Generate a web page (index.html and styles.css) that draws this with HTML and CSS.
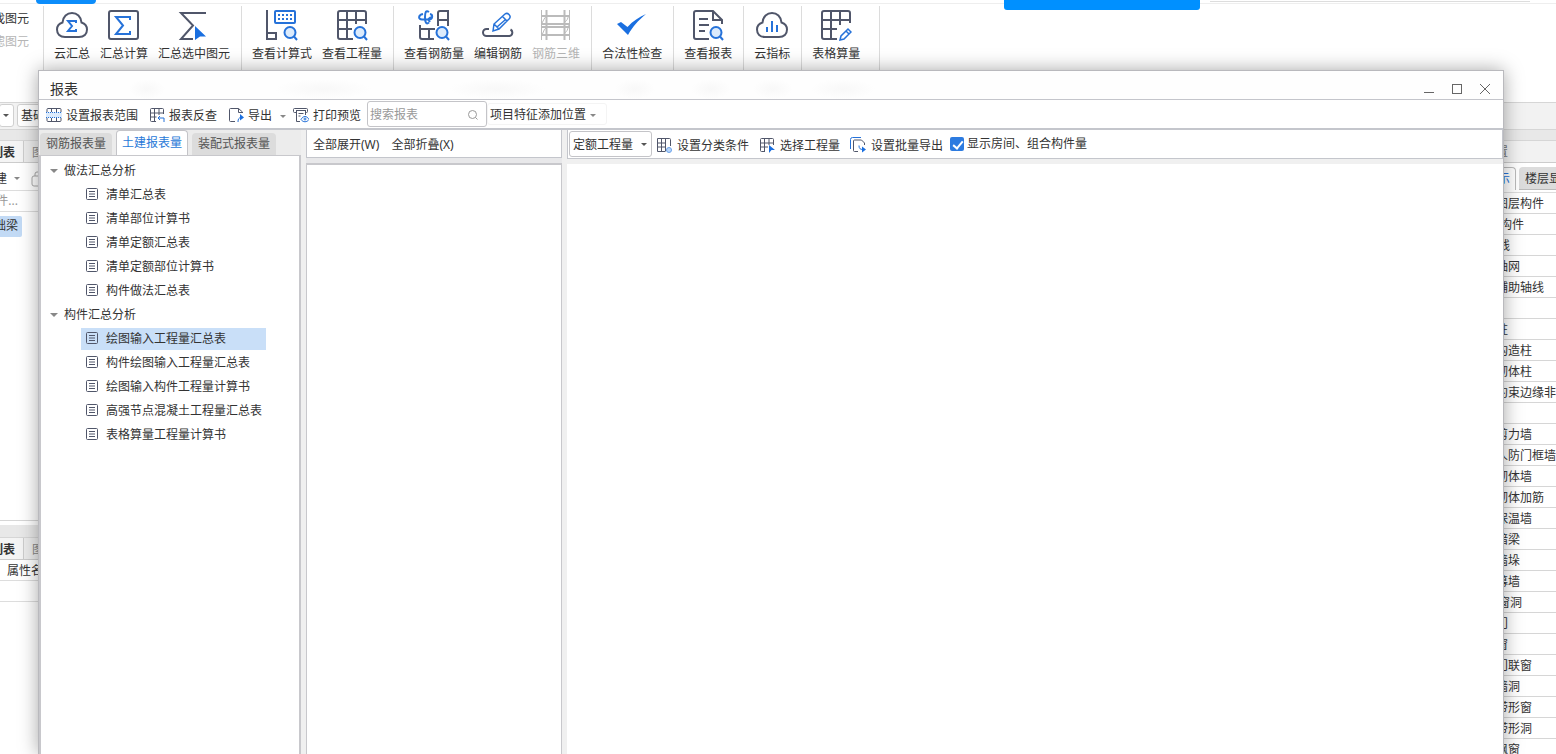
FILE: index.html
```html
<!DOCTYPE html>
<html lang="zh-CN">
<head>
<meta charset="utf-8">
<title>报表</title>
<link rel="stylesheet" href="styles.css">
</head>
<body>
<svg class="sprite" aria-hidden="true">
  <symbol id="cloud" viewBox="0 0 32 32"><path d="M9 28C4 28 1 25 1 20.500 1 17 3.500 14.500 6.500 13.500 7 7.500 11 4 16 4s9 3.500 9.500 9.500c3 1 5.500 3.500 5.500 7 0 4.500-3 7.500-8 7.500z"/></symbol>
  <symbol id="lens" viewBox="0 0 32 32"><g class="blue"><circle class="tint" cx="24" cy="23.500" r="5.500"/><path d="M28 27.500l3 3.500"/></g></symbol>
  <symbol id="doc" viewBox="0 0 14 14"><rect x="1.500" y="1.500" width="11" height="11" rx="1"/><path d="M4 4.500h6M4 7h6M4 9.500h6"/></symbol>
</svg>
<div class="app">
  <header class="strip">
    <span class="strip-tab"></span>
    <span class="strip-banner"></span>
    <span class="strip-search"></span>
  </header>
  <nav class="ribbon" aria-label="工程量">
    <div class="ribbon-side"><span>查找图元</span><span class="off">过滤图元</span></div>
    <div class="group">
      <button class="tool"><svg class="big"><use href="#cloud"/><path class="blue" d="M20 14v-2h-8l4 5-4 5h8v-2"/></svg>云汇总</button>
      <button class="tool"><svg class="big"><rect x="1" y="2" width="29" height="28" rx="2"/><path class="blue" d="M22 11V8H8l7 8.500L8 25h14v-3"/></svg>汇总计算</button>
      <button class="tool"><svg class="big"><path d="M28 4H3l12 12.500L3 30h12"/><path class="fill" d="M17 17l11 10.500h-6L17 31z"/></svg>汇总选中图元</button>
    </div>
    <div class="group">
      <button class="tool"><svg class="big"><path d="M1 1v29h9v-6H1"/><rect class="blue" x="9" y="2" width="20" height="12" rx="1"/><path class="blue dots" d="M12 6H27M12 10H27"/><use href="#lens"/></svg>查看计算式</button>
      <button class="tool"><svg class="big"><path d="M30 15V4a2 2 0 0 0-2-2H4a2 2 0 0 0-2 2v24a2 2 0 0 0 2 2h13M2 11h28M2 20h14M11 2v28M20 2v13"/><use href="#lens"/></svg>查看工程量</button>
    </div>
    <div class="group">
      <button class="tool"><svg class="big"><path d="M20 17V4a2 2 0 0 1 2-2h8v15M20 11h10M2 16v12a2 2 0 0 0 2 2h12M2 20h15M11 20v10"/><path class="blue" d="M11 3C8 1 7 3 7 8s1 8 4 5.500M5 5C0 6 0 10.500 4 10.500h7c4 0 4-5 1-5.500M13 8l-3 2.500 2 2.500"/><use href="#lens"/></svg>查看钢筋量</button>
      <button class="tool"><svg class="big"><path d="M7 20H4.500a3.500 3.500 0 0 0 0 7h23a3.500 3.500 0 0 0 1-6.500"/><path class="blue slim2" d="M11 22l1-7L23 5q2-1.500 4 .5t.5 4L17 20zM20.500 7.500l4.500 4.500M15 18l8-7M12 15l5 5"/></svg>编辑钢筋</button>
      <button class="tool" disabled><svg class="big"><path d="M6.500 1v30M24.500 1v30M1.500 7h28M2 15h27M2 18h27M2 26h27"/><path class="slim" d="M1.500 1v30M29.500 1v30M8 6Q5 7 2 14M24 14q4-3 5-8M8 17q-4 2-6 9M24 25q4-3 5-9"/></svg>钢筋三维</button>
    </div>
    <div class="group">
      <button class="tool"><svg class="big"><path class="fill" d="M1 15l4-2 6.500 5C17 12 23 8 30 5 22 12 17 17 12 26z"/></svg>合法性检查</button>
    </div>
    <div class="group">
      <button class="tool"><svg class="big"><path d="M30 15v-4l-9-9H4a2 2 0 0 0-2 2v24a2 2 0 0 0 2 2h13M21 2v9h9M7 10h9M7 16h10M7 22h6"/><use href="#lens"/></svg>查看报表</button>
    </div>
    <div class="group">
      <button class="tool"><svg class="big"><use href="#cloud"/><path class="blue" d="M11 18v5M16 12v11M21 16v7"/></svg>云指标</button>
    </div>
    <div class="group last">
      <button class="tool"><svg class="big"><path d="M30 14V4a2 2 0 0 0-2-2H4a2 2 0 0 0-2 2v24a2 2 0 0 0 2 2h13M2 11h28M2 20h15M11 2v28M20 2v14"/><path class="blue slim2" d="M20 31l1-4 7-7 3 3-7 7zM26 22l3 3"/></svg>表格算量</button>
    </div>
  </nav>
  <div class="context"><span class="combo first"><i class="caret"></i></span><span class="combo second">基础层</span></div>
  <div class="gapbar"></div>
  <div class="panes">
    <aside class="left-pane">
      <div class="ptabs"><span class="ptab on">构件列表</span><span class="ptab">图纸管理</span></div>
      <div class="newrow"><span class="word">新建</span><i class="caret grey"></i><svg class="copy" viewBox="0 0 14 16"><rect x="4" y="1" width="12" height="10" rx="2"/><rect class="sheet" x="1" y="5" width="11" height="10" rx="2"/></svg></div>
      <div class="findrow"><span>搜索构件...</span></div>
      <div class="listing"><span class="picked">基础梁</span></div>
      <div class="gapbar low"></div>
      <div class="ptabs"><span class="ptab on">属性列表</span><span class="ptab">图层管理</span></div>
      <div class="prop">属性名称</div>
      <div class="prop"></div>
    </aside>
    <aside class="right-pane">
      <div class="rhead">显示设置</div>
      <div class="rtabs"><span class="rtab on">图元显示</span><span class="rtab">楼层显示</span></div>
      <ul class="layers">
        <li>图层构件</li><li class="root">构件</li><li class="head">轴线</li><li>轴网</li><li>辅助轴线</li><li></li><li>柱</li><li>构造柱</li><li>砌体柱</li><li>约束边缘非阴影区</li><li></li><li>剪力墙</li><li>人防门框墙</li><li>砌体墙</li><li>砌体加筋</li><li>保温墙</li><li>暗梁</li><li>墙垛</li><li>幕墙</li><li class="head">门窗洞</li><li>门</li><li>窗</li><li>门联窗</li><li>墙洞</li><li>带形窗</li><li>带形洞</li><li>飘窗</li>
      </ul>
    </aside>
  </div>
</div>

<section class="dialog" role="dialog" aria-labelledby="dialog-title">
  <header class="title">
    <h1 id="dialog-title">报表</h1>
    <div class="winbtns">
      <button aria-label="最小化"><svg viewBox="0 0 12 12"><path d="M1 9.500h10"/></svg></button>
      <button aria-label="最大化"><svg viewBox="0 0 12 12"><rect x="1.500" y="1.500" width="9" height="9"/></svg></button>
      <button aria-label="关闭"><svg viewBox="0 0 12 12"><path d="M1 1l10 10M11 1L1 11"/></svg></button>
    </div>
  </header>
  <div class="bar">
    <button class="cmd"><svg class="small" viewBox="0 0 16 16"><path d="M5.500 1v14M10.500 1v14M1 5V2.500a1 1 0 0 1 1-1h12a1 1 0 0 1 1 1V5M1 11v2.500a1 1 0 0 0 1 1h12a1 1 0 0 0 1-1V11"/><path class="band" d="M0 5h16v6H0z"/><path class="blue" stroke-dasharray="1 1" d="M0 5.500h16M0 10.500h16"/></svg>设置报表范围</button>
    <button class="cmd"><svg class="small" viewBox="0 0 16 16"><path d="M14.500 7V2.500a1 1 0 0 0-1-1h-11a1 1 0 0 0-1 1v11a1 1 0 0 0 1 1H7M1.500 6h13M1.500 10h6M5.500 1v13M10 1v7"/><path class="blue" d="M15 15v-4H9m2-2l-2 2 2 2"/></svg>报表反查</button>
    <button class="cmd"><svg class="small" viewBox="0 0 16 16"><path d="M14.500 6v-1l-4-3.500h-8a1 1 0 0 0-1 1v11a1 1 0 0 0 1 1H7M10.500 1.500v4h4"/><path class="blue" d="M10 15c0-3 1-4.500 3-4.500"/><path class="fill" d="M12 7l4 3.500-4 3z"/></svg>导出<i class="caret grey"></i></button>
    <button class="cmd"><svg class="small" viewBox="0 0 16 16"><path d="M3 5.500H1.500a1 1 0 0 1-1-1v-2a1 1 0 0 1 1-1h12a1 1 0 0 1 1 1v2a1 1 0 0 1-1 1H13M3 3.500h10M3.500 3.500v11H7M12.500 3.500V8M5.500 6.500h5M5.500 9h2"/><path class="blue" d="M8 12.500c2-4 6-4 8 0-2 3-6 3-8 0z"/><circle class="blue" cx="12" cy="12" r="1"/></svg>打印预览</button>
    <label class="search"><input type="text" placeholder="搜索报表" aria-label="搜索报表"><svg viewBox="0 0 12 12"><circle cx="5.500" cy="5.500" r="4"/><path d="M8.500 8.500l2 2"/></svg></label>
    <button class="place">项目特征添加位置<i class="caret grey"></i></button>
  </div>
  <div class="body">
    <div class="tree-col">
      <div class="tabs" role="tablist">
        <button role="tab" class="tab">钢筋报表量</button>
        <button role="tab" class="tab active" aria-selected="true">土建报表量</button>
        <button role="tab" class="tab">装配式报表量</button>
      </div>
      <div class="tree">
        <div class="branch"><i class="caret tri"></i>做法汇总分析</div>
        <ul>
          <li><svg><use href="#doc"/></svg>清单汇总表</li>
          <li><svg><use href="#doc"/></svg>清单部位计算书</li>
          <li><svg><use href="#doc"/></svg>清单定额汇总表</li>
          <li><svg><use href="#doc"/></svg>清单定额部位计算书</li>
          <li><svg><use href="#doc"/></svg>构件做法汇总表</li>
        </ul>
        <div class="branch"><i class="caret tri"></i>构件汇总分析</div>
        <ul>
          <li class="sel"><svg><use href="#doc"/></svg>绘图输入工程量汇总表</li>
          <li><svg><use href="#doc"/></svg>构件绘图输入工程量汇总表</li>
          <li><svg><use href="#doc"/></svg>绘图输入构件工程量计算书</li>
          <li><svg><use href="#doc"/></svg>高强节点混凝土工程量汇总表</li>
          <li><svg><use href="#doc"/></svg>表格算量工程量计算书</li>
        </ul>
      </div>
    </div>
    <div class="mid-col">
      <div class="mid-bar"><button>全部展开(W)</button><button>全部折叠(X)</button></div>
      <div class="mid-view"></div>
    </div>
    <div class="main-col">
      <div class="main-bar">
        <label class="pick"><select aria-label="工程量类型"><option>定额工程量</option><option>清单工程量</option></select><i class="caret"></i></label>
        <button class="cmd"><svg class="small" viewBox="0 0 16 16"><path d="M9 14.500H1.500v-13h12a1 1 0 0 1 1 1V9M5.500 1.500v13M9.500 1.500v13M1.500 6h8M1.500 10h8"/><circle class="gear" cx="13" cy="13" r="2.500"/></svg>设置分类条件</button>
        <button class="cmd"><svg class="small" viewBox="0 0 16 16"><path d="M14.500 8V2.500a1 1 0 0 0-1-1h-11a1 1 0 0 0-1 1v11a1 1 0 0 0 1 1H6M1.500 6h13M1.500 10H9M5.500 1v13M10 1v7"/><path class="fill" d="M10 8l6 5h-3.500L10 16z"/></svg>选择工程量</button>
        <button class="cmd"><svg class="small" viewBox="0 0 16 16"><path class="blue" d="M.5 12V2.500a2 2 0 0 1 2-2H11"/><path d="M14.500 8V6l-3-3h-7a1 1 0 0 0-1 1v9.500a1 1 0 0 0 1 1H8"/><path class="blue" d="M9 8.500c0 3 1 4 4 4"/><path class="fill" d="M12 9.500l4 3-4 3z"/></svg>设置批量导出</button>
        <label class="check"><input type="checkbox" checked>显示房间、组合构件量</label>
      </div>
      <div class="main-view"></div>
    </div>
  </div>
</section>
</body>
</html>
```
FILE: styles.css
```css
* { box-sizing: border-box; }
html, body { height: 100%; }
body {
  margin: 0;
  position: relative;
  overflow: hidden;
  font: 12px/18px "Noto Sans", "Noto Sans CJK SC", sans-serif;
  color: #333;
  background: #fff;
}
button, input, select { font: inherit; color: inherit; }
button { border: 0; padding: 0; background: none; white-space: nowrap; }
ul { list-style: none; margin: 0; padding: 0; }
.sprite { position: absolute; width: 0; height: 0; }
svg { fill: none; stroke: #50566a; }
.blue { stroke: #2672d9; }
.tint { fill: #dcebfc; }
.fill { fill: #1a6fe0; stroke: none; }
.band { fill: #dcebfc; stroke: none; }
.sheet { fill: #fff; }
.gear { fill: #b9d6f8; stroke: #6ba2ea; }
.caret {
  flex: none;
  border: 3px solid transparent;
  border-top-color: #555;
  border-bottom-width: 0;
}
.caret.grey { border-top-color: #888; }

/* application behind the dialog */
.app { height: 100%; display: flex; flex-direction: column; }
.strip {
  flex: none;
  display: flex;
  align-items: flex-start;
  height: 4px;
  padding: 0 26px 0 36px;
  border-bottom: 1px solid #eee;
}
.strip-tab { width: 60px; height: 4px; border-radius: 0 0 6px 6px; background: #0c8dfb; }
.strip-banner { width: 196px; height: 10px; margin-left: auto; border-radius: 0 0 3px 3px; background: #0090ff; }
.strip-search { width: 320px; height: 2px; margin-left: 10px; border-bottom: 1px solid #ddd; }
.ribbon { flex: none; display: flex; height: 98px; padding-top: 2px; }
.ribbon-side {
  width: 44px;
  overflow: hidden;
  display: flex;
  flex-direction: column;
  align-items: flex-end;
  gap: 5px;
  padding: 4px 14px 0 0;
  border-right: 1px solid #dcdcdc;
  white-space: nowrap;
}
.off { color: #b5b5b5; }
.group {
  display: flex;
  align-items: flex-start;
  gap: 10px;
  padding: 3px 11px 0 10px;
  border-right: 1px solid #dcdcdc;
}
.group.last { padding-right: 19px; }
.tool { display: flex; flex-direction: column; align-items: center; gap: 4px; }
.tool:disabled { color: #b5b5b5; }
.tool:disabled svg { stroke: #bbb; }
.big { width: 32px; height: 32px; stroke-width: 2; }
.slim { stroke-width: 1; }
.slim2 { stroke-width: 1.5; }
.dots { stroke-dasharray: 2 2; stroke-width: 2; }
.context {
  flex: none;
  display: flex;
  gap: 3px;
  height: 28px;
  padding: 1px 0 2px;
  background: #f2f2f2;
  border-top: 1px solid #d6d6d6;
  border-bottom: 1px solid #d6d6d6;
}
.combo { display: flex; align-items: center; background: #fff; border: 1px solid #d0d0d0; border-radius: 3px; }
.combo.first { width: 15px; margin-left: -1px; padding-left: 3px; }
.combo.second { width: 90px; padding-left: 3px; }
.gapbar { flex: none; height: 11px; background: #e8e8e8; border-bottom: 1px solid #d6d6d6; }
.gapbar.low { height: 17px; border-top: 4px solid #fff; }
.panes { flex: 1; min-height: 0; display: flex; justify-content: space-between; }
.left-pane { width: 60px; overflow: hidden; white-space: nowrap; }
.ptabs { display: flex; height: 22px; background: #ececec; border-bottom: 1px solid #ccc; }
.ptab { width: 60px; flex: none; padding: 3px 8px 0; color: #888; }
.ptab.on {
  width: 24px;
  display: flex;
  justify-content: flex-end;
  overflow: hidden;
  border-right: 1px solid #ccc;
  background: #f4f4f4;
  color: #333;
  font-weight: bold;
}
.newrow { display: flex; align-items: center; gap: 7px; height: 28px; padding-top: 4px; border-bottom: 1px solid #ddd; }
.word { width: 7px; display: flex; justify-content: flex-end; overflow: hidden; }
.copy { width: 14px; height: 16px; margin-left: 4px; stroke: #aaa; }
.findrow { display: flex; justify-content: flex-end; width: 18px; height: 20px; padding-top: 1px; color: #999; }
.listing { height: 310px; padding-top: 4px; border-top: 1px solid #ddd; border-bottom: 1px solid #d6d6d6; }
.picked {
  display: flex;
  justify-content: flex-end;
  width: 22px;
  height: 21px;
  padding: 1px 4px;
  overflow: hidden;
  border-radius: 0 2px 2px 0;
  background: #c2daf5;
}
.prop { height: 21px; padding: 2px 7px 0; border-bottom: 1px solid #ddd; }
.right-pane { width: 82px; overflow: hidden; white-space: nowrap; }
.rhead { display: flex; justify-content: flex-end; height: 22px; padding: 2px 48px 0 0; background: #f2f2f2; border-bottom: 1px solid #ccc; color: #777; }
.rtabs { display: flex; justify-content: flex-end; gap: 3px; height: 29px; padding: 4px 0 2px; }
.rtab { width: 37px; flex: none; padding: 3px 6px; overflow: hidden; background: #dcdcdc; border-bottom: 1px solid #bbb; border-radius: 4px 0 0 0; }
.rtab.on { display: flex; justify-content: flex-end; background: #fff; border: 1px solid #bbb; border-bottom: 0; border-radius: 0 4px 0 0; padding: 2px 5px; color: #2672d9; }
.layers { border-top: 1px solid #ddd; }
.layers li { height: 21px; padding: 2px 0 0 22px; border-bottom: 1px solid #d6d6d6; }
.layers .head { padding-left: 12px; }
.layers .root { padding-left: 26px; }

/* report dialog */
.dialog {
  position: absolute;
  top: 70px;
  right: 52px;
  bottom: 0;
  left: 38px;
  display: flex;
  flex-direction: column;
  background: #f0f0f0;
  border: 1px solid #b9b9bd;
  border-bottom: 0;
  box-shadow: 0 0 18px rgba(0, 0, 0, .35);
}
.title {
  flex: none;
  display: flex;
  align-items: flex-end;
  justify-content: space-between;
  height: 29px;
  padding: 0 12px 0 11px;
  border-bottom: 1px solid #c4c5cb;
  background:
    radial-gradient(closest-side, #f8f8f8, transparent) 90px 8px / 36px 20px no-repeat,
    radial-gradient(closest-side, #f8f8f8, transparent) 236px 8px / 96px 20px no-repeat,
    radial-gradient(closest-side, #f8f8f8, transparent) 410px 8px / 96px 20px no-repeat,
    radial-gradient(closest-side, #f8f8f8, transparent) 576px 8px / 40px 20px no-repeat,
    radial-gradient(closest-side, #f8f8f8, transparent) 652px 8px / 40px 20px no-repeat,
    radial-gradient(closest-side, #f8f8f8, transparent) 714px 8px / 40px 20px no-repeat,
    radial-gradient(closest-side, #f8f8f8, transparent) 772px 8px / 64px 20px no-repeat,
    #fefefe;
}
.title h1 { margin: 0; font-size: 14px; font-weight: normal; line-height: 20px; }
.winbtns { display: flex; gap: 16px; padding-bottom: 4px; }
.winbtns button { width: 12px; height: 12px; display: flex; }
.winbtns svg { width: 12px; height: 12px; stroke: #666; }
.bar {
  flex: none;
  display: flex;
  align-items: center;
  height: 30px;
  padding-left: 7px;
  background: #fff;
  border-bottom: 2px solid #c4c6cc;
}
.cmd { display: flex; align-items: center; gap: 4px; margin-right: 11px; padding-top: 4px; }
.cmd svg { margin-bottom: 2px; }
.cmd .caret { margin-left: 4px; }
.bar .cmd:nth-child(3) { margin-right: 7px; }
.bar .cmd:nth-child(4) { margin-right: 6px; }
.small { width: 16px; height: 16px; }
.search {
  display: flex;
  align-items: center;
  width: 120px;
  height: 26px;
  padding: 1px 7px 0 2px;
  border: 1px solid #c4c4c8;
  border-radius: 3px;
}
.search input { flex: 1; min-width: 0; border: 0; outline: 0; padding: 0; background: none; }
.search input::placeholder { color: #999; opacity: 1; }
.search svg { width: 12px; height: 12px; stroke: #999; }
.place {
  display: flex;
  align-items: center;
  gap: 4px;
  height: 22px;
  padding: 2px 10px 0 2px;
  border: 1px solid #f4f4f4;
  border-radius: 3px;
}
.body { flex: 1; min-height: 0; display: flex; }
.tree-col { width: 262px; flex: none; display: flex; flex-direction: column; }
.tabs { flex: none; display: flex; align-items: flex-end; gap: 4px; height: 25px; padding-left: 1px; background: #ececec; }
.tab { height: 22px; padding: 0 6px; border-radius: 4px 4px 0 0; background: #dcdcdc; color: #555; }
.tab.active { height: 25px; padding: 0 5px; border: 1px solid #c4c4c8; border-bottom: 0; background: #fff; color: #2879d8; }
.tree {
  flex: 1;
  padding-top: 3px;
  background: #fff;
  border: 2px solid #c8c8cc;
  border-top-width: 1px;
  border-bottom: 0;
}
.branch { display: flex; align-items: center; gap: 6px; height: 24px; padding-left: 9px; }
.tri { border-width: 4px 4px 0; border-top-color: #888; }
.tree ul { display: flex; flex-direction: column; gap: 2px; padding: 1px 33px 1px 40px; }
.tree li { display: flex; align-items: center; gap: 7px; height: 22px; padding-left: 4px; white-space: nowrap; }
.tree li svg { width: 14px; height: 14px; flex: none; margin-bottom: 2px; }
.tree .sel { background: #c9dff8; }
.mid-col { width: 256px; flex: none; margin-left: 5px; display: flex; flex-direction: column; gap: 5px; background: #e8e8ea; }
.mid-bar { flex: none; display: flex; align-items: center; gap: 12px; height: 28px; padding: 2px 6px 0; background: #fff; border: 1px solid #c4c6cc; border-top: 0; }
.mid-view { flex: 1; background: #fff; border: 1px solid #c8c8cc; border-top-width: 2px; border-bottom: 0; }
.main-col { flex: 1; min-width: 0; margin-left: 5px; display: flex; flex-direction: column; gap: 5px; }
.main-bar { flex: none; display: flex; align-items: center; height: 29px; padding-left: 1px; background: #fff; border: 1px solid #c4c6cc; border-top: 0; }
.main-bar .cmd { gap: 5px; margin-right: 10px; }
.main-bar .cmd:nth-child(4) { margin-right: 7px; }
.pick { position: relative; margin-right: 4px; }
.pick select { appearance: none; display: block; width: 83px; height: 26px; padding: 1px 16px 0 3px; border: 1px solid #c4c4c8; border-radius: 3px; background: #fff; }
.pick .caret { position: absolute; right: 5px; top: 12px; pointer-events: none; }
.check { display: flex; align-items: center; gap: 3px; }
.check input { appearance: none; position: relative; width: 14px; height: 14px; margin: 0; border-radius: 2px; background: #2d7be0; }
.check input:checked::after {
  content: "";
  position: absolute;
  left: 5px;
  top: 2px;
  width: 4px;
  height: 8px;
  border: solid #fff;
  border-width: 0 2px 2px 0;
  transform: rotate(40deg);
}
.main-view { flex: 1; background: #fff; }
```
